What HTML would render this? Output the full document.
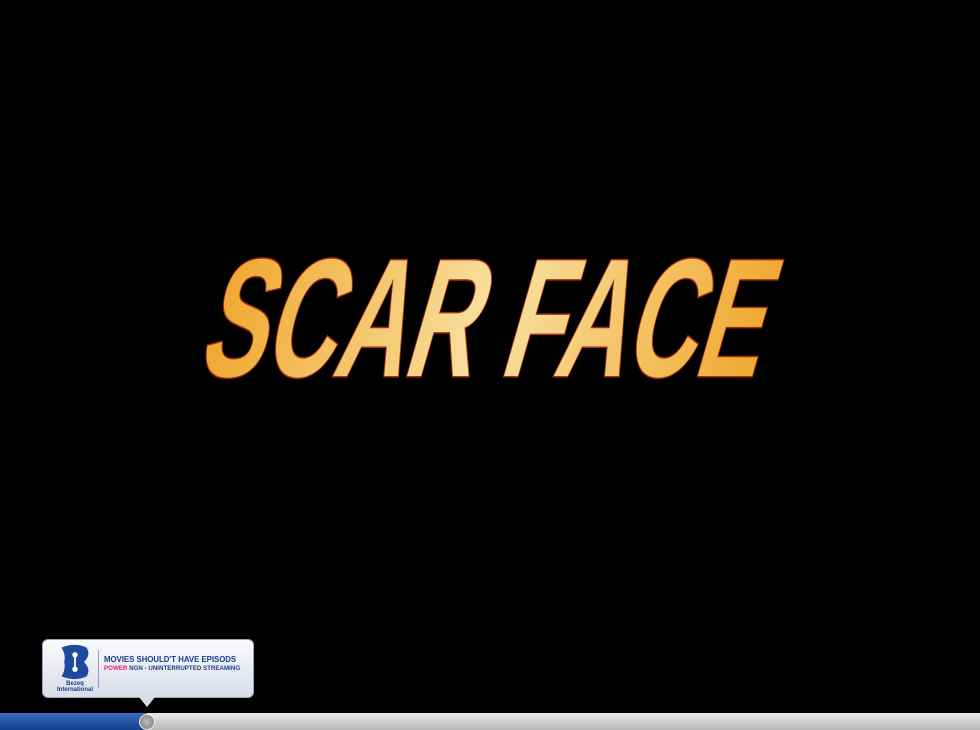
<!DOCTYPE html>
<html><head><meta charset="utf-8"><style>
body{margin:0;width:980px;height:730px;background:#000;overflow:hidden;position:relative;font-family:"Liberation Sans",sans-serif}
.bub{position:absolute;left:42px;top:639px;width:210px;height:57px;border-radius:6px;background:linear-gradient(#fafbfd,#d9dde6);border:1px solid #9aa3b8}
.bub:after{content:"";position:absolute;left:96px;top:57px;border:8px solid transparent;border-top:10px solid #d9dde6}
.t1{position:absolute;left:61px;top:15px;font-size:7.8px;font-weight:bold;color:#1c3c8c;white-space:nowrap}
.t2{position:absolute;left:61px;top:25px;font-size:6.2px;font-weight:bold;color:#1c3c8c;white-space:nowrap}
.sep{position:absolute;left:55px;top:10px;width:1px;height:38px;background:#8ea0c8}
.bar{position:absolute;left:0;top:713px;width:980px;height:17px;background:linear-gradient(#e8e8e8,#b8b8b8)}
.blue{position:absolute;left:0;top:713px;width:147px;height:17px;background:linear-gradient(#3a6cc0,#123e8e)}
.knob{position:absolute;left:139px;top:714px;width:14px;height:14px;border-radius:50%;background:radial-gradient(#bbb,#777);border:1px solid #eee}
</style></head><body>
<svg width="980" height="730" style="position:absolute;left:0;top:0">
<defs><linearGradient id="g" x1="0" x2="1"><stop offset="0" stop-color="#f0a830"/><stop offset=".5" stop-color="#f8e0a0"/><stop offset="1" stop-color="#f0a830"/></linearGradient></defs>
<text x="0" y="0" transform="translate(196,376) skewX(-16)" font-family="Liberation Sans" font-weight="bold" font-size="168" textLength="560" lengthAdjust="spacingAndGlyphs" fill="url(#g)" stroke="#a03010" stroke-width="3" paint-order="stroke">SCAR FACE</text>
</svg>
<div class="bub">
<svg width="36" height="36" style="position:absolute;left:14px;top:4px" viewBox="0 0 40 40"><path d="M5 4Q20 -2 33 4Q38 12 30 20Q38 28 33 36Q20 42 5 36Q10 28 8 20Q10 12 5 4Z" fill="#1c4a9c"/><circle cx="20" cy="12" r="3" fill="#fff"/><circle cx="20" cy="28" r="3" fill="#fff"/><rect x="19" y="12" width="2" height="16" fill="#fff"/></svg>
<div style="position:absolute;left:8px;top:41px;font-size:6px;font-weight:bold;color:#1c3c8c;text-align:center;line-height:6px;width:48px">Bezeq<br>International</div>
<div class="sep"></div>
<div class="t1">MOVIES SHOULD'T HAVE EPISODS</div>
<div class="t2"><span style="color:#e0207a">POWER</span> NGN - UNINTERRUPTED STREAMING</div>
</div>
<div class="bar"></div><div class="blue"></div><div class="knob"></div>
</body></html>
